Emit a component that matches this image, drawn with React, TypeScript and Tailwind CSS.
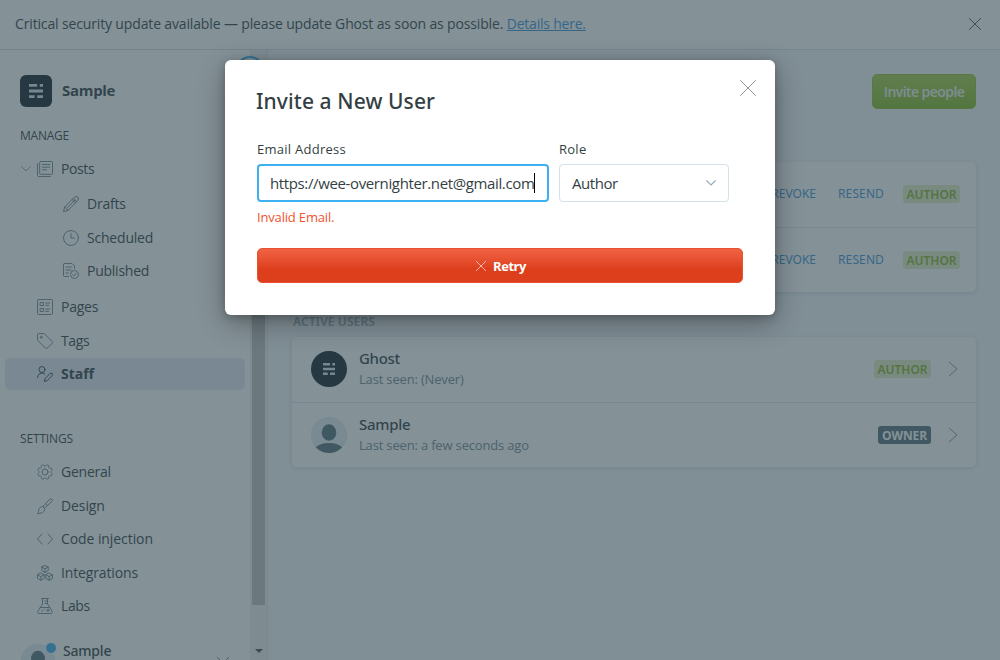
import type { ReactNode } from "react";

type IconProps = { children: ReactNode; className?: string };

function Icon({ children, className = "h-4 w-4" }: IconProps) {
  return (
    <svg
      viewBox="0 0 24 24"
      className={`shrink-0 ${className}`}
      fill="none"
      stroke="currentColor"
      strokeWidth={1.5}
      strokeLinecap="round"
      strokeLinejoin="round"
    >
      {children}
    </svg>
  );
}

const PostsIcon = () => (
  <Icon>
    <rect x="4" y="0.75" width="19.25" height="19.25" rx="1.5" />
    <path d="M20 23.25H2.25a1.5 1.5 0 0 1-1.5-1.5V4M8 5.25h11M8 9.25h11M8 13.25h6.5" />
  </Icon>
);
const DraftsIcon = () => (
  <Icon>
    <path d="M22.2 1.8a3.6 3.6 0 0 0-5.1 0L2.6 16.3.75 23.25l6.95-1.85L22.2 6.9a3.6 3.6 0 0 0 0-5.1zM15.4 3.5l5.1 5.1M17.9 6.1 5.2 18.8M13.6 5.3l5.1 5.1M2.6 16.3l5.1 5.1" />
  </Icon>
);
const ScheduledIcon = () => (
  <Icon>
    <circle cx="12" cy="12" r="11.2" />
    <path d="M12 5.5V12h5" />
  </Icon>
);
const PublishedIcon = () => (
  <Icon>
    <circle cx="17.25" cy="17.25" r="6" />
    <path d="m14.6 17.6 1.8 1.8 3.4-4M8.25 20.25h-6a1.5 1.5 0 0 1-1.5-1.5V2.25a1.5 1.5 0 0 1 1.5-1.5H13.5L17.25 4.5V8M4.5 6h8M4.5 10.5h7.5M4.5 15H8" />
  </Icon>
);
const PagesIcon = () => (
  <Icon>
    <rect x="0.75" y="0.75" width="22.5" height="22.5" rx="1.5" />
    <path d="M5.25 5.25h4.5v4.5h-4.5zM5.25 14.25h4.5v4.5h-4.5zM13 6h6M13 9.5h4.5M13 15h6M13 18.5h4.5" />
  </Icon>
);
const TagsIcon = () => (
  <Icon>
    <path d="M.75 2.25v7.6c0 .6.25 1.2.66 1.6l11.2 11.2a2 2 0 0 0 2.9 0l7.1-7.1a2 2 0 0 0 0-2.9L11.4 1.41a2.3 2.3 0 0 0-1.6-.66H2.25a1.5 1.5 0 0 0-1.5 1.5z" />
    <circle cx="6.4" cy="6.4" r="1.6" />
  </Icon>
);
const StaffIcon = () => (
  <Icon>
    <circle cx="7.5" cy="5.25" r="4.5" />
    <path d="M.75 17.25a6.75 6.75 0 0 1 11-5.2M22.6 11.4a2.2 2.2 0 0 0-3.1 0l-7.3 7.3-1.1 4.3 4.3-1.1 7.2-7.3a2.2 2.2 0 0 0 0-3.2z" />
  </Icon>
);

// Outline of an eight-toothed cog, sampled in polar coordinates.
const cogPath =
  Array.from({ length: 96 }, (_, i) => {
    const angle = (i / 96) * Math.PI * 2;
    const radius = 10.1 + 1.3 * Math.tanh(2 * Math.cos(8 * angle + Math.PI));
    const x = 12 + radius * Math.sin(angle);
    const y = 12 - radius * Math.cos(angle);
    return `${i === 0 ? "M" : "L"}${x.toFixed(2)} ${y.toFixed(2)}`;
  }).join("") + "Z";

const GeneralIcon = () => (
  <Icon>
    <circle cx="12" cy="12" r="4.5" />
    <path d={cogPath} />
  </Icon>
);
const DesignIcon = () => (
  <Icon>
    <path d="M8.8 12.8 19.3 1.7a2.3 2.3 0 0 1 3.2 3.2L11.3 15.4M8.8 12.8l2.5 2.6c1 3.5-1.5 7.9-10.5 7.9 1.8-1.6 1.5-3.1 1.9-5.7.5-3.4 3.2-5 6.1-4.8zM13 8.5l2.7 2.7" />
  </Icon>
);
const CodeIcon = () => (
  <Icon>
    <path d="m7.5 4.5-6.75 7.5 6.75 7.5M16.5 4.5l6.75 7.5-6.75 7.5" />
  </Icon>
);
const IntegrationsIcon = () => (
  <Icon>
    <path d="m12 .75 4.8 2.4v5.4L12 11.1 7.2 8.55v-5.4zM7.2 3.15 12 5.7l4.8-2.55M12 5.7v5.4M5.8 12.3l4.9 2.4v5.5l-4.9 2.7-5-2.7v-5.5zM.8 14.7l5 2.6 4.9-2.6M5.8 17.3v5.6M18.2 12.3l5 2.4v5.5l-5 2.7-4.9-2.7v-5.5zM13.3 14.7l4.9 2.6 5-2.6M18.2 17.3v5.6" />
  </Icon>
);
const LabsIcon = () => (
  <Icon>
    <path d="M6.75.75h10.5M8.25.75v8L1.2 20.1a2 2 0 0 0 1.7 3.15h18.2a2 2 0 0 0 1.7-3.15L15.75 8.75v-8M12 4.5h3.7M12 8.2h3.7M5 14.25h14M7 19.3h1.5M16.5 16.5v4M14.5 18.5h4M11 16.8h.2" />
  </Icon>
);
const CrossIcon = ({ className, width }: { className: string; width: number }) => (
  <Icon className={className}>
    <path d="M.75.75l22.5 22.5M23.25.75.75 23.25" strokeWidth={width} />
  </Icon>
);

function GhostMark({ className }: { className: string }) {
  return (
    <svg viewBox="0 0 14 14" className={className} fill="currentColor">
      <path d="M0 0h8.2v2.8H0zM10.8 0H14v2.8h-3.2zM0 5.6h14v2.8H0zM0 11.2h5.6V14H0zM8.2 11.2H14V14H8.2z" />
    </svg>
  );
}

function Person({ className }: { className: string }) {
  return (
    <svg viewBox="0 0 36 36" className={className}>
      <defs>
        <clipPath id="avatar">
          <circle cx="18" cy="18" r="18" />
        </clipPath>
      </defs>
      <circle cx="18" cy="18" r="17.6" fill="#e3eef2" stroke="#d9e6eb" strokeWidth="0.8" />
      <g clipPath="url(#avatar)" fill="#54707c">
        <ellipse cx="18" cy="15.5" rx="7.3" ry="8.3" />
        <path d="M4 31c4-3.8 9-5 14-5s10 1.2 14 5v7H4z" />
      </g>
    </svg>
  );
}

type NavProps = { icon: ReactNode; label: string; className: string };

function NavItem({ icon, label, className }: NavProps) {
  return (
    <div className={`flex shrink-0 items-center gap-2 text-sm ${className}`}>
      <span className="text-[#738a94]">{icon}</span>
      <span>{label}</span>
    </div>
  );
}

function RoleBadge() {
  return (
    <span className="flex h-[18px] w-[57px] items-center justify-center rounded-[3px] bg-[#e4efc6] pt-px font-['Noto_Sans',sans-serif] text-xs font-semibold text-[#8ab52c]">
      AUTHOR
    </span>
  );
}

function InviteRow({ className }: { className: string }) {
  return (
    <div className={`flex items-center justify-end pr-4 text-xs text-[#3e95d8] ${className}`}>
      <span className="mr-[22px] pb-px font-['Noto_Sans',sans-serif]">REVOKE</span>
      <span className="mr-[19px] pb-px font-['Noto_Sans',sans-serif] tracking-[0.12px]">RESEND</span>
      <RoleBadge />
    </div>
  );
}

type UserProps = { avatar: ReactNode; name: string; seen: string; badge: ReactNode; className: string };

function UserRow({ avatar, name, seen, badge, className }: UserProps) {
  return (
    <div className={`flex items-center pr-[18px] pl-[19px] ${className}`}>
      {avatar}
      <div className="ml-3 flex grow flex-col">
        <span className="h-[21px] font-['Noto_Sans',sans-serif] text-[15px] leading-[21px] font-medium tracking-[-0.3px]">
          {name}
        </span>
        <span className="h-[21px] text-[13px] leading-[21px] tracking-[-0.17px] text-[#738a94]">{seen}</span>
      </div>
      {badge}
      <svg viewBox="0 0 10 16" className="ml-[17px] h-4 w-2.5 text-[#738a94]" fill="none" stroke="currentColor">
        <path d="m1 1 8 7-8 7" strokeWidth="0.9" />
      </svg>
    </div>
  );
}

function Sidebar() {
  return (
    <aside className="relative flex w-[268px] shrink-0 border-r border-[#e3eaef] bg-white">
      <div className="flex w-[250px] flex-col overflow-hidden">
        <div className="mt-[25px] ml-5 flex h-8 shrink-0 items-center gap-2.5">
          <span className="flex h-8 w-8 items-center justify-center rounded-[6px] bg-[#15212a] text-[#dde8ec]">
            <GhostMark className="h-[14px] w-[14px]" />
          </span>
          <span className="pb-0.5 text-[15px] font-bold tracking-[-0.3px]">Sample</span>
        </div>
        <div className="mt-[20px] ml-5 h-[18px] shrink-0 text-xs leading-[18px] tracking-[-0.23px]">MANAGE</div>
        <div className="mt-[7px] flex h-[34px] shrink-0 items-center gap-[5px] pl-5">
          <svg viewBox="0 0 12 8" className="h-2 w-3 text-[#8fa3ad]" fill="none" stroke="currentColor">
            <path d="m1.5 1.5 4.5 4.5 4.5-4.5" />
          </svg>
          <NavItem icon={<PostsIcon />} label="Posts" className="h-[34px] tracking-[-0.4px]" />
        </div>
        <NavItem icon={<DraftsIcon />} label="Drafts" className="h-[35px] pl-[63px] tracking-[-0.2px]" />
        <NavItem icon={<ScheduledIcon />} label="Scheduled" className="h-[33px] pl-[63px] tracking-[-0.2px]" />
        <NavItem icon={<PublishedIcon />} label="Published" className="h-[34px] pl-[63px] tracking-[-0.25px]" />
        <NavItem icon={<PagesIcon />} label="Pages" className="mt-[2px] h-[34px] pl-[37px] tracking-[-0.25px]" />
        <NavItem icon={<TagsIcon />} label="Tags" className="h-[34px] pl-[37px] tracking-[-0.35px]" />
        <div className="ml-[5px] flex h-8 w-[240px] shrink-0 items-center gap-2 rounded-[5px] bg-[#e3e9f3] pl-8 text-sm font-bold">
          <span className="text-[#394b54]">
            <StaffIcon />
          </span>
          Staff
        </div>
        <div className="mt-[40px] ml-5 h-[18px] shrink-0 text-xs leading-[18px] tracking-[-0.15px]">SETTINGS</div>
        <NavItem icon={<GeneralIcon />} label="General" className="mt-[7px] h-[34px] pl-[37px] tracking-[-0.25px]" />
        <NavItem icon={<DesignIcon />} label="Design" className="h-[33px] pl-[37px] tracking-[-0.1px]" />
        <NavItem icon={<CodeIcon />} label="Code injection" className="h-[34px] pl-[37px] tracking-[-0.08px]" />
        <NavItem icon={<IntegrationsIcon />} label="Integrations" className="h-[33px] pl-[37px] tracking-[-0.14px]" />
        <NavItem icon={<LabsIcon />} label="Labs" className="h-[34px] pl-[37px] tracking-[-0.4px]" />
        <div className="mt-[21px] flex shrink-0 items-start pl-[21px]">
          <div className="relative">
            <Person className="h-[34px] w-[34px]" />
            <span className="absolute -top-[2px] left-[24px] h-3 w-3 rounded-full border border-white bg-[#3eb0ef]" />
          </div>
          <span className="-mt-[3px] ml-2 grow font-['Noto_Sans',sans-serif] text-sm font-medium tracking-[-0.2px]">
            Sample
          </span>
          <svg viewBox="0 0 14 10" className="mt-3 mr-5 h-2.5 w-3.5 text-[#738a94]" fill="none" stroke="currentColor">
            <path d="m1 1 6 6 6-6" />
          </svg>
        </div>
      </div>
      <div className="flex w-[17px] flex-col items-center bg-[#f1f1f1] pt-[17px]">
        <div className="h-[538px] w-[13px] bg-[#c1c1c1]" />
        <svg viewBox="0 0 8 4" className="mt-[44px] h-1 w-2" fill="#505050">
          <path d="M0 0h8L4 4z" />
        </svg>
      </div>
      <span className="absolute top-[6px] left-[236px] h-7 w-7 rounded-full border-2 border-[#3eb0ef] bg-white" />
    </aside>
  );
}

function Staff() {
  return (
    <main className="flex grow flex-col bg-[#f4f8fb] pr-6 pl-6">
      <div className="mt-6 flex justify-end">
        <div className="flex h-[35px] w-[104px] items-center justify-center rounded-[5px] border border-[#93c22e] bg-linear-to-b from-[#a6cf48] to-[#85bb26] pt-px text-sm font-semibold tracking-[-0.55px] text-[#f0f4f6]">
          Invite people
        </div>
      </div>
      <section className="mt-[53px] rounded-[5px] bg-white shadow-[0_1px_4px_rgba(40,70,90,0.15)]">
        <InviteRow className="h-[66px] border-b border-[#dfe8ee] pb-px" />
        <InviteRow className="h-16" />
      </section>
      <h2 className="mt-[21px] ml-px h-[18px] font-['Noto_Sans',sans-serif] text-xs leading-[18px] font-semibold tracking-[0.1px] text-[#9baeb8]">
        ACTIVE USERS
      </h2>
      <section className="mt-[6px] rounded-[5px] bg-white shadow-[0_1px_4px_rgba(40,70,90,0.15)]">
        <UserRow
          className="h-[66px] border-b border-[#dfe8ee] pb-px"
          avatar={
            <span className="flex h-9 w-9 items-center justify-center rounded-full bg-[#15212a] text-[#dde8ec]">
              <GhostMark className="h-3 w-3" />
            </span>
          }
          name="Ghost"
          seen="Last seen: (Never)"
          badge={<RoleBadge />}
        />
        <UserRow
          className="h-16"
          avatar={<Person className="h-9 w-9" />}
          name="Sample"
          seen="Last seen: a few seconds ago"
          badge={
            <span className="flex h-[18px] w-[53px] items-center justify-center rounded-[3px] bg-[#54707c] pt-px text-xs font-bold tracking-[-0.1px] text-white">
              OWNER
            </span>
          }
        />
      </section>
    </main>
  );
}

function InviteModal() {
  return (
    <div className="h-[255px] w-[550px] rounded-[6px] bg-white px-8 shadow-[0_8px_28px_rgba(0,0,0,0.32),0_2px_8px_rgba(0,0,0,0.2)]">
      <div className="flex justify-between">
        <h1 className="mt-[26px] -ml-px h-[30px] font-['Noto_Sans',sans-serif] text-[21px] leading-[30px] font-medium tracking-[0.1px]">
          Invite a New User
        </h1>
        <span className="mt-5 -mr-[13px] text-[#777]">
          <CrossIcon className="h-4 w-4" width={1.2} />
        </span>
      </div>
      <div className="mt-[21px] flex gap-2.5">
        <div className="w-[292px]">
          <label className="block h-6 text-[13px] leading-6 tracking-[0.26px]">Email Address</label>
          <div className="mt-[3px] flex h-[38px] items-center rounded-[4px] border-2 border-[#3eb0ef] pl-[11px] text-[15px] tracking-[-0.37px]">
            https://wee-overnighter.net@gmail.com
            <span className="h-5 w-px bg-black" />
          </div>
          <p className="mt-[5px] h-5 text-[13px] leading-5 tracking-[-0.17px] text-[#f05230]">Invalid Email.</p>
        </div>
        <div className="w-[170px]">
          <label className="block h-6 text-[13px] leading-6 tracking-[0.26px]">Role</label>
          <div className="mt-[3px] flex h-[38px] items-center justify-between rounded-[4px] border border-[#d3e1ea] pr-[11px] pl-3 text-[15px] tracking-[-0.45px]">
            Author
            <svg viewBox="0 0 12 8" className="h-2 w-3 text-[#8fa9b8]" fill="none" stroke="currentColor">
              <path d="m1.5 1.5 4.5 4.5 4.5-4.5" strokeWidth="1.1" />
            </svg>
          </div>
        </div>
      </div>
      <div className="mt-[21px] flex h-[35px] items-center justify-center rounded-[5px] border border-[#e8502e] bg-linear-to-b from-[#f16244] to-[#dd3f1c] to-60% pt-0.5 text-[13px] font-bold tracking-[-0.45px] text-white">
        <span className="mr-[7px] ml-0.5 pb-0.5 text-[#ffd0c4]">
          <CrossIcon className="h-2.5 w-2.5" width={2} />
        </span>
        Retry
      </div>
    </div>
  );
}

export default function App() {
  return (
    <div className="relative h-[660px] w-[1000px] overflow-hidden font-['Open_Sans','Noto_Sans',sans-serif] text-[#343f44]">
      <div className="flex h-full flex-col">
        <header className="flex h-[50px] shrink-0 items-center justify-between border-b border-[#d7e2e8] bg-white pr-[19px] pl-[15px] text-sm">
          <p className="pb-px tracking-[-0.145px]">
            Critical security update available — please update Ghost as soon as possible.{" "}
            <a className="tracking-[-0.22px] text-[#3e95d8] underline">Details here.</a>
          </p>
          <CrossIcon className="mb-px h-3 w-3" width={1.8} />
        </header>
        <div className="flex h-[610px]">
          <Sidebar />
          <Staff />
        </div>
      </div>
      <div className="absolute inset-0 flex items-start justify-center bg-[rgba(50,72,82,0.6)] pt-[60px]">
        <InviteModal />
      </div>
    </div>
  );
}
